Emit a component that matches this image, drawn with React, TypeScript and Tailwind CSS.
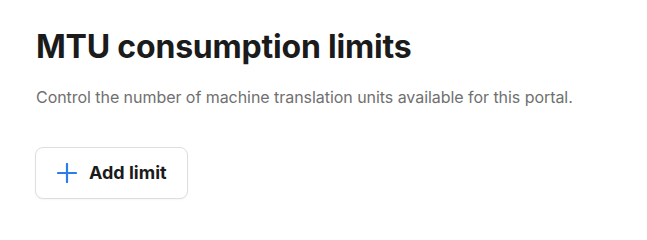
export default function App() {
    return (
        <div className="min-h-screen bg-white px-9 pt-[27px] font-['Inter',sans-serif]">
            <h1 className="text-[32px] leading-10 font-bold tracking-[-0.2px] text-[#1b1b1b]">MTU consumption limits</h1>
            <p className="mt-[18px] text-base leading-6 tracking-[-0.05px] text-[#707070]">
                Control the number of machine translation units available for this portal.
            </p>
            <button className="mt-[38px] -ml-px flex h-[52px] w-[153px] items-center gap-3 rounded-lg border border-[#dedede] bg-white pl-[21px] text-lg font-bold text-[#1b1b1b] shadow-[0_1px_2px_rgba(0,0,0,0.04)]">
                <svg width="20" height="20" viewBox="0 0 20 20" fill="none" stroke="#2b7de9" strokeWidth="2.2" strokeLinecap="round">
                    <path d="M10 1v18M1 10h18" />
                </svg>
                Add limit
            </button>
        </div>
    );
}
